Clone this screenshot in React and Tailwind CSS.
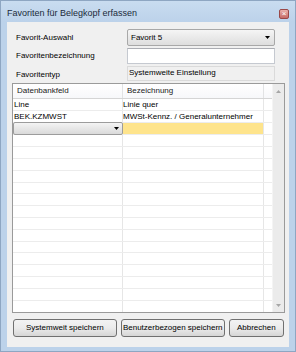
import React from "react";

const rowHeights = ["h-[12px]","h-[12px]","h-[12px]","h-[12px]","h-[12px]","h-[12px]","h-[12px]","h-[11px]","h-[12px]","h-[12px]","h-[12px]","h-[12px]","h-[11px]","h-[12px]","h-[12px]","h-[12px]","h-[12px]","h-[11px]"];

function Arrow({ color = "#000", w = 5, h = 3, up = false }) {
  return (
    <svg width={w} height={h} viewBox={`0 0 ${w} ${h}`}>
      {up ? (
        <polygon points={`0,${h} ${w},${h} ${w / 2},0`} fill={color} />
      ) : (
        <polygon points={`0,0 ${w},0 ${w / 2},${h}`} fill={color} />
      )}
    </svg>
  );
}

function Button({ w, children }) {
  return (
    <div className={`${w} h-[18px] flex items-center justify-center rounded-[3px] border border-[#707070] bg-gradient-to-b from-[#f3f3f3] via-[#ebebeb] to-[#d6d6d6] text-black`}>
      {children}
    </div>
  );
}

export default function App() {
  const rows = rowHeights.map((h, i) => {
    const last = i === rowHeights.length - 1;
    let c1 = null;
    let c2 = null;
    let c2bg = "";
    if (i === 0) {
      c1 = "Line";
      c2 = "Linie quer";
    } else if (i === 1) {
      c1 = "BEK.KZMWST";
      c2 = "MWSt-Kennz. / Generalunternehmer";
    } else if (i === 2) {
      c2bg = "bg-[#fee48c]";
    }
    return (
      <div key={i} className={`${h} flex ${last ? "" : "border-b border-[#ececec]"}`}>
        <div className="w-[110px] border-r border-[#e6e6e6] flex items-center pl-[1px] relative">
          {i === 2 ? (
            <div className="absolute left-0 top-[-1px] w-[110px] h-[13px] border border-[#9c9c9c] rounded-[2px] bg-gradient-to-b from-[#f4f4f4] to-[#dadada] flex items-center justify-end pr-[3px]">
              <Arrow />
            </div>
          ) : (
            c1
          )}
        </div>
        <div className={`w-[141px] border-r border-[#e6e6e6] flex items-center ${c2bg}`}>
          {c2}
        </div>
        <div className="flex-1" />
      </div>
    );
  });

  return (
    <div className="w-[296px] h-[352px] flex flex-col bg-[#bcd2ea] border border-[#8ea6c2] font-['Liberation_Sans',Arial,sans-serif] text-[8px] leading-none text-black overflow-hidden">
      <div className="h-[21px] flex items-center justify-between pl-[6px] pr-[6px] bg-gradient-to-b from-[#c9dcf0] to-[#bcd2ea]">
        <span className="text-[#1b2a3a] text-[9px] pt-[4px]">Favoriten für Belegkopf erfassen</span>
        <div className="w-[10px] h-[10px] mt-[4px] rounded-[2px] border border-[#9a4848] bg-gradient-to-b from-[#eab0ab] to-[#c56a66] flex items-center justify-center text-white text-[8px] leading-none">
          ×
        </div>
      </div>
      <div className="flex-1 mx-[6px] mb-[4px] bg-[#f0f0f0] flex flex-col pt-[7px] px-[5px] pb-[10px]">
        <div className="flex h-[17px] items-center">
          <div className="w-[115px] pl-[4px]">Favorit-Auswahl</div>
          <div className="w-[148px] h-[17px] rounded-[2px] border border-[#a8a8a8] bg-gradient-to-b from-[#f5f5f5] to-[#dedede] flex items-center justify-between pl-[3px] pr-[4px]">
            <span>Favorit 5</span>
            <Arrow />
          </div>
        </div>
        <div className="flex h-[16px] items-center mt-[2px]">
          <div className="w-[115px] pl-[4px]">Favoritenbezeichnung</div>
          <div className="w-[148px] h-[16px] border border-[#c5c9d0] border-t-[#abadb3] bg-white" />
        </div>
        <div className="flex h-[15px] mt-[2px]">
          <div className="w-[115px] pl-[4px] pt-[5px]">Favoritentyp</div>
          <div className="w-[148px] h-[15px] border border-[#dadada] bg-[#f0f0f0] pl-[1px] pt-[2px]">
            Systemweite Einstellung
          </div>
        </div>
        <div className="mt-[2px] w-[273px] h-[230px] border border-[#9a9a9a] bg-white flex">
          <div className="flex-1 flex flex-col">
            <div className="h-[15px] flex border-b border-[#d5d5d5] bg-gradient-to-b from-[#ffffff] to-[#f7f8fa]">
              <div className="w-[110px] border-r border-[#e2e3e4] flex items-center pl-[4px] text-[#222]">Datenbankfeld</div>
              <div className="w-[141px] border-r border-[#e2e3e4] flex items-center pl-[4px] text-[#222]">Bezeichnung</div>
              <div className="flex-1" />
            </div>
            {rows}
          </div>
          <div className="w-[12px] bg-[#ebebeb] border-l border-[#f4f4f4] flex flex-col items-center justify-between pt-[6px] pb-[5px]">
            <Arrow color="#a6a6a6" up />
            <Arrow color="#a6a6a6" />
          </div>
        </div>
        <div className="flex mt-[6px] pl-[1px] gap-[4px]">
          <Button w="w-[105px]">Systemweit speichern</Button>
          <Button w="w-[105px]">Benutzerbezogen speichern</Button>
          <Button w="w-[56px]">Abbrechen</Button>
        </div>
      </div>
    </div>
  );
}
